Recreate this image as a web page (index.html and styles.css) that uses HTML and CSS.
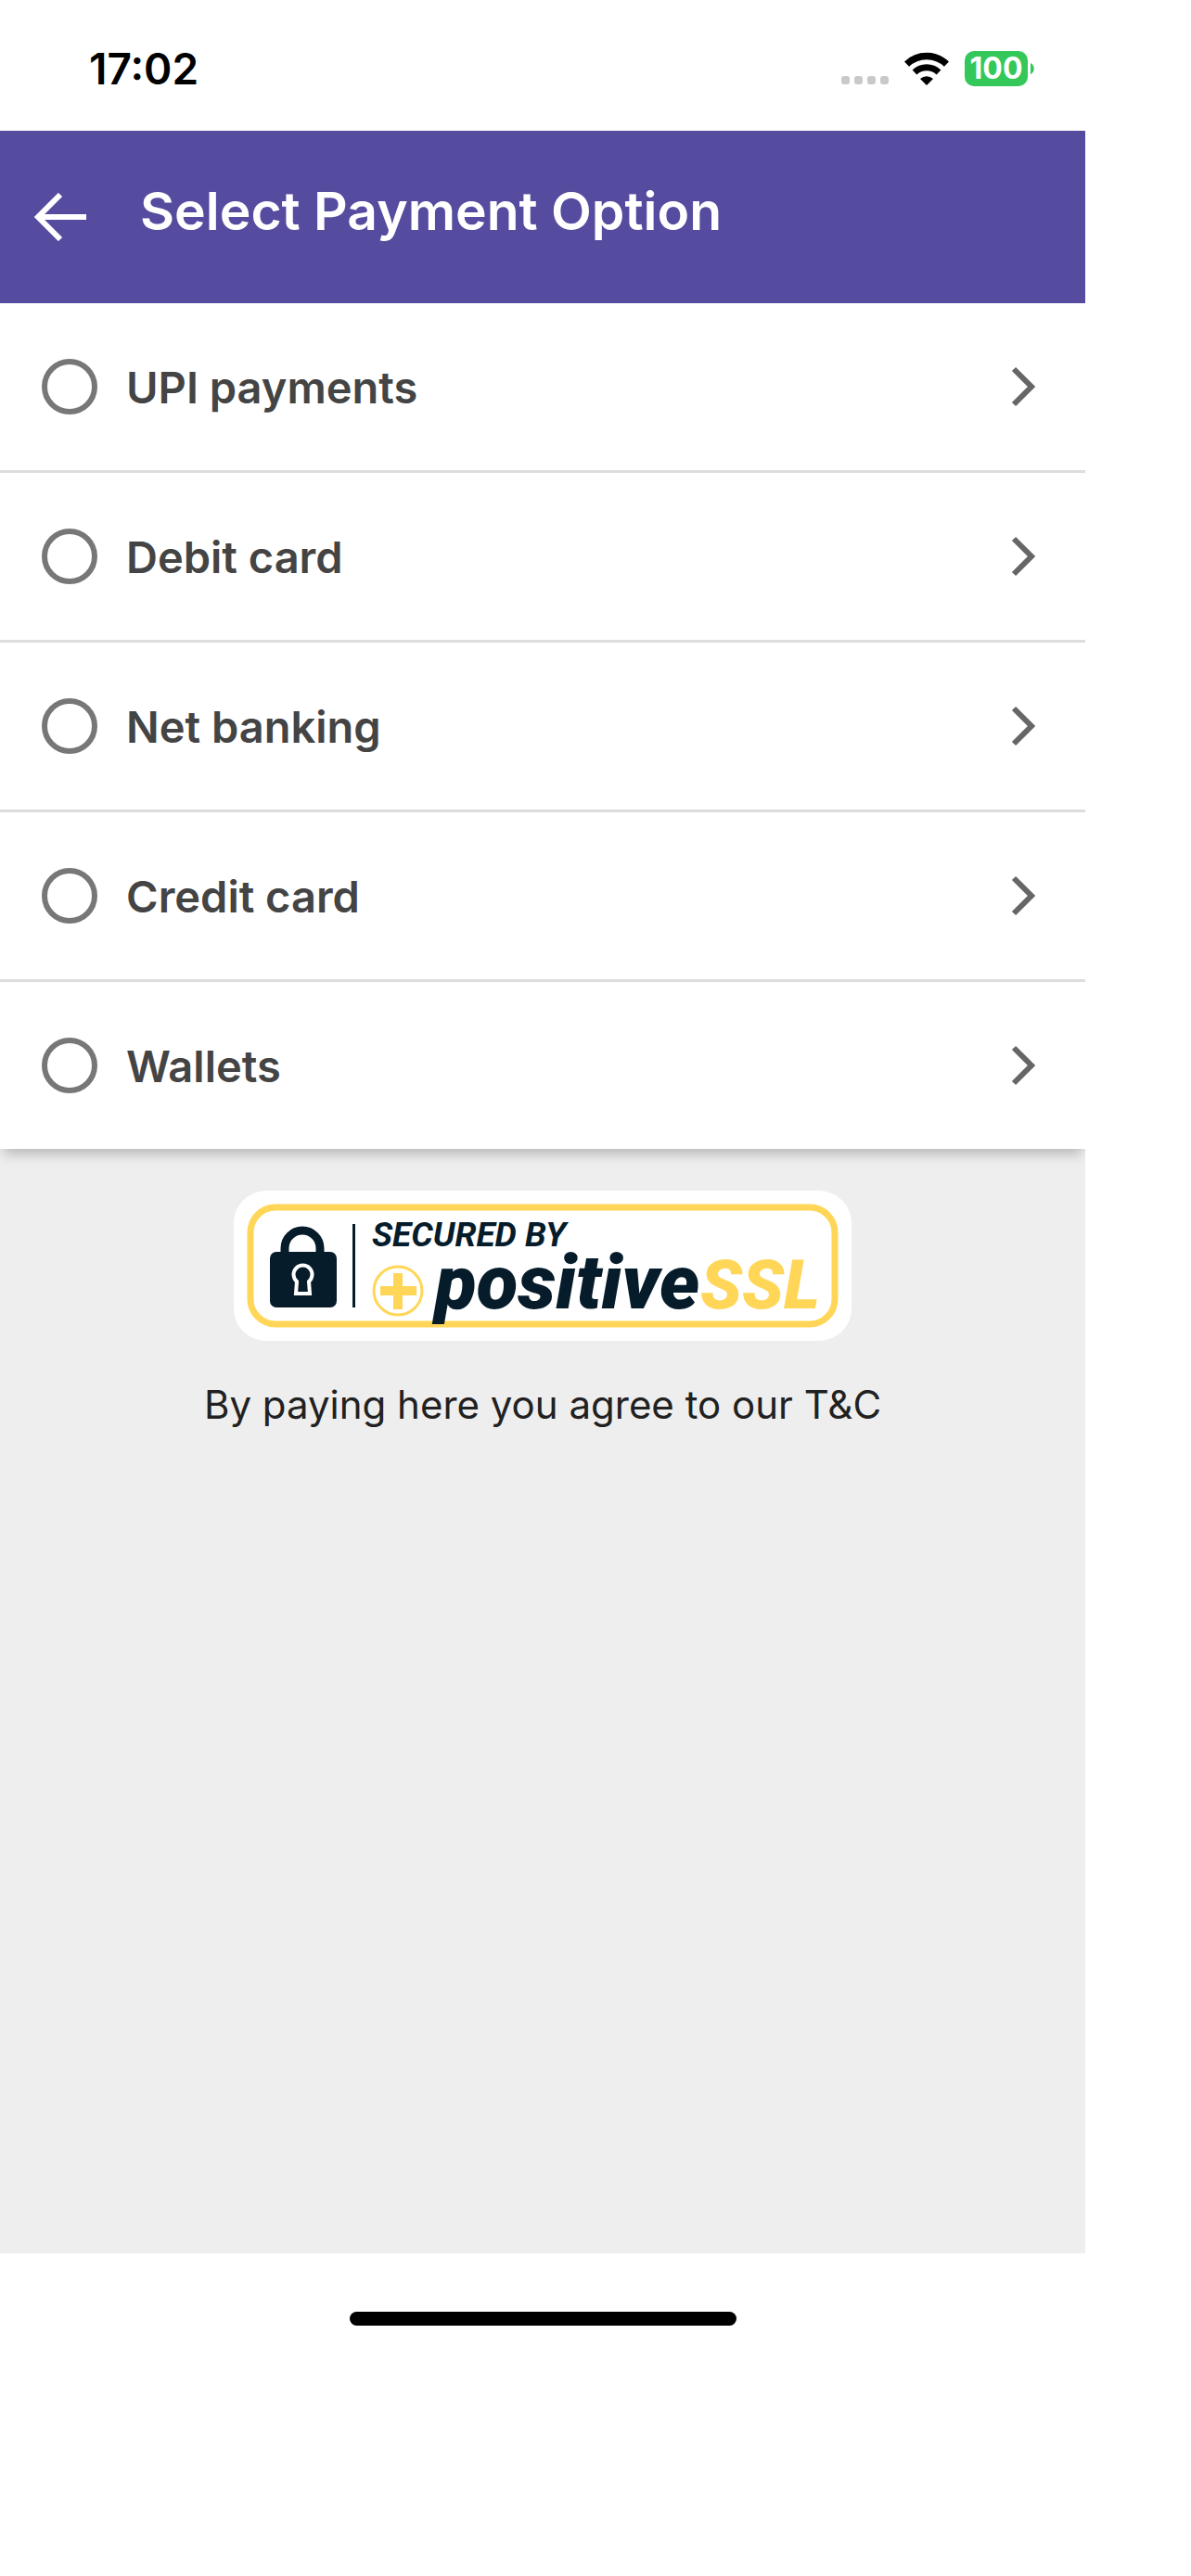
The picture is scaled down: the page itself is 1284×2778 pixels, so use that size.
FILE: index.html
```html
<!DOCTYPE html>
<html lang="en">
<head>
    <meta charset="UTF-8">
    <meta name="viewport" content="width=device-width, initial-scale=1.0">
    <title>Select Payment Option</title>
    <link rel="stylesheet" href="styles.css">
</head>
<body>
    <div class="status-bar">
        <span class="time">17:02</span>
        <div class="status-icons">
            <svg class="signal" viewBox="0 0 51 9" fill="#c9c9c9" aria-hidden="true">
                <rect width="9" height="9" rx="3"/>
                <rect x="14" width="9" height="9" rx="3"/>
                <rect x="28" width="9" height="9" rx="3"/>
                <rect x="42" width="9" height="9" rx="3"/>
            </svg>
            <svg class="wifi" viewBox="0 0 48 36" aria-hidden="true">
                <path d="M2.5 13.2a31 31 0 0 1 43 0" fill="none" stroke="#000" stroke-width="7.4"/>
                <path d="M11 22a19 19 0 0 1 26 0" fill="none" stroke="#000" stroke-width="7"/>
                <path d="M17 29a10.500 10.500 0 0 1 14 0l-7 7z"/>
            </svg>
            <div class="battery">
                <span class="battery-level">100</span>
                <svg class="battery-cap" viewBox="0 0 4 12" aria-hidden="true"><path d="M0 0c5 2 5 10 0 12z" fill="#34c759"/></svg>
            </div>
        </div>
    </div>

    <header class="header">
        <button class="back" type="button" aria-label="Back">
            <svg viewBox="0 0 56 52" fill="none" stroke="#fff" stroke-width="6" aria-hidden="true">
                <path d="M28 2L4 26l24 24M4 26h52"/>
            </svg>
        </button>
        <h1>Select Payment Option</h1>
    </header>

    <main class="content">
        <form class="options">
            <label class="option">
                <input type="radio" name="method" value="upi">
                <span class="name">UPI payments</span>
                <svg class="chevron" viewBox="0 0 84 84" aria-hidden="true"><path d="M32 23l19 19-19 19"/></svg>
            </label>
            <label class="option">
                <input type="radio" name="method" value="debit">
                <span class="name">Debit card</span>
                <svg class="chevron" viewBox="0 0 84 84" aria-hidden="true"><path d="M32 23l19 19-19 19"/></svg>
            </label>
            <label class="option">
                <input type="radio" name="method" value="netbanking">
                <span class="name">Net banking</span>
                <svg class="chevron" viewBox="0 0 84 84" aria-hidden="true"><path d="M32 23l19 19-19 19"/></svg>
            </label>
            <label class="option">
                <input type="radio" name="method" value="credit">
                <span class="name">Credit card</span>
                <svg class="chevron" viewBox="0 0 84 84" aria-hidden="true"><path d="M32 23l19 19-19 19"/></svg>
            </label>
            <label class="option">
                <input type="radio" name="method" value="wallets">
                <span class="name">Wallets</span>
                <svg class="chevron" viewBox="0 0 84 84" aria-hidden="true"><path d="M32 23l19 19-19 19"/></svg>
            </label>
        </form>

        <svg class="ssl-badge" viewBox="0 0 666 162" role="img" aria-label="Secured by positiveSSL">
            <rect width="666" height="162" rx="35" fill="#fff"/>
            <rect x="18" y="18" width="630" height="126" rx="27" fill="none" stroke="#ffd657" stroke-width="7"/>
            <!-- padlock -->
            <path d="M55 68V62a19 19 0 0 1 38 0v6" fill="none" stroke="#061c2b" stroke-width="9"/>
            <rect x="39" y="66" width="72" height="60" rx="7" fill="#061c2b"/>
            <path d="M68 98a10 10 0 1 1 13 0l1 13H67z" fill="none" stroke="#fff" stroke-width="4"/>
            <rect x="128" y="36" width="3" height="90" fill="#061c2b"/>
            <text class="ssl-small" x="149" y="60">SECURED BY</text>
            <circle cx="177" cy="108" r="26" fill="none" stroke="#ffd657" stroke-width="3"/>
            <path d="M158 108h39M177 89v39" fill="none" stroke="#ffd657" stroke-width="10"/>
            <text class="ssl-large" x="217" y="127">positive</text>
            <text class="ssl-yellow" x="503" y="127">SSL</text>
        </svg>
        <p class="terms">By paying here you agree to our T&amp;C</p>
    </main>

    <div class="home-area">
        <div class="home-bar"></div>
    </div>
</body>
</html>
```
FILE: styles.css
```css
* {
    box-sizing: border-box;
}
body {
    font-family: 'Inter', 'Liberation Sans', sans-serif;
    display: flex;
    flex-direction: column;
    min-height: 100vh;
    margin: 0;
    padding-right: 114px;
    background: #ffffff;
    color: #212121;
}
.status-bar {
    display: flex;
    align-items: center;
    justify-content: space-between;
    height: 141px;
    padding: 7px 55px 0 96px;
}
.time {
    color: #000;
    font-size: 46px;
    font-weight: 600;
}
.status-icons {
    display: flex;
    align-items: center;
    gap: 17px;
}
.signal {
    width: 51px;
    height: 9px;
    margin-top: 24px;
}
.wifi {
    width: 48px;
    height: 36px;
}
.battery {
    display: flex;
    align-items: center;
    gap: 3px;
}
.battery-level {
    width: 68px;
    height: 38px;
    border-radius: 10px;
    background: #34c759;
    color: #fff;
    font-size: 32px;
    font-weight: 700;
    line-height: 38px;
    text-align: center;
}
.battery-cap {
    width: 4px;
    height: 12px;
}
.header {
    display: flex;
    align-items: center;
    gap: 58px;
    height: 186px;
    padding: 0 37px;
    background: #554c9f;
    color: #fff;
}
.back {
    width: 56px;
    padding: 0;
    border: 0;
    background: none;
}
.back svg {
    display: block;
    width: 56px;
    height: 52px;
}
h1 {
    margin: 0;
    padding-bottom: 12px;
    font-size: 57px;
    font-weight: 600;
    line-height: 72px;
}
.content {
    display: flex;
    flex: 1;
    flex-direction: column;
    align-items: center;
    overflow: hidden;
    background: #eeeeee;
}
.options {
    width: 100%;
    background: #fff;
    box-shadow: 0 10px 12px -4px rgba(0, 0, 0, 0.22);
}
.option {
    display: flex;
    align-items: center;
    gap: 31px;
    height: 183px;
    padding: 0 25px 0 45px;
    border-bottom: 3px solid #dddddd;
}
.option:last-child {
    height: 180px;
    border-bottom: 0;
}
.option input {
    appearance: none;
    width: 60px;
    height: 60px;
    margin: 0;
    border: 6px solid #777777;
    border-radius: 50%;
}
.option input:checked {
    border-width: 18px;
    border-color: #554c9f;
}
.name {
    flex: 1;
    color: #444444;
    font-size: 47px;
    font-weight: 600;
}
.chevron {
    width: 84px;
    height: 84px;
    fill: none;
    stroke: #666666;
    stroke-width: 6px;
}
.ssl-badge {
    width: 666px;
    height: 162px;
    margin-top: 45px;
}
.ssl-small,
.ssl-large,
.ssl-yellow {
    font-family: 'Roboto', sans-serif;
    font-style: italic;
    fill: #061c2b;
}
.ssl-small {
    font-size: 37px;
    font-weight: 700;
}
.ssl-large {
    font-size: 82px;
    font-weight: 900;
}
.ssl-yellow {
    fill: #ffd657;
    font-size: 74px;
    font-weight: 900;
}
.terms {
    margin: 39px 0;
    font-size: 42px;
    line-height: 60px;
}
.home-area {
    height: 348px;
    padding-top: 63px;
}
.home-bar {
    width: 417px;
    height: 15px;
    margin: 0 auto;
    border-radius: 8px;
    background: #000;
}
```
